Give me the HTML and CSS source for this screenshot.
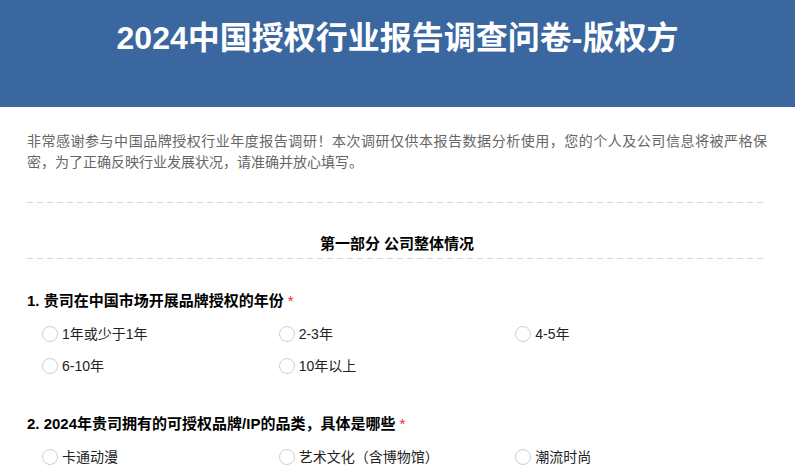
FILE: index.html
```html
<!DOCTYPE html>
<html lang="zh-CN">
<head>
<meta charset="utf-8">
<title>2024中国授权行业报告调查问卷-版权方</title>
<link rel="stylesheet" href="styles.css">
</head>
<body>
<header class="banner">
  <h1 class="banner-title">2024中国授权行业报告调查问卷-版权方</h1>
</header>
<main class="survey">
  <p class="intro">非常感谢参与中国品牌授权行业年度报告调研！本次调研仅供本报告数据分析使用，您的个人及公司信息将被严格保密，为了正确反映行业发展状况，请准确并放心填写。</p>
  <div class="divider divider-top"></div>
  <h2 class="section-title">第一部分 公司整体情况</h2>
  <div class="divider divider-section"></div>

  <section class="question">
    <div class="q-title">1. 贵司在中国市场开展品牌授权的年份 <span class="req">*</span></div>
    <div class="options">
      <label class="option"><span class="radio"></span><span class="opt-text">1年或少于1年</span></label>
      <label class="option"><span class="radio"></span><span class="opt-text">2-3年</span></label>
      <label class="option"><span class="radio"></span><span class="opt-text">4-5年</span></label>
      <label class="option"><span class="radio"></span><span class="opt-text">6-10年</span></label>
      <label class="option"><span class="radio"></span><span class="opt-text">10年以上</span></label>
    </div>
  </section>

  <section class="question">
    <div class="q-title">2. 2024年贵司拥有的可授权品牌/IP的品类，具体是哪些 <span class="req">*</span></div>
    <div class="options">
      <label class="option"><span class="radio"></span><span class="opt-text">卡通动漫</span></label>
      <label class="option"><span class="radio"></span><span class="opt-text">艺术文化（含博物馆）</span></label>
      <label class="option"><span class="radio"></span><span class="opt-text">潮流时尚</span></label>
    </div>
  </section>
</main>
</body>
</html>
```

FILE: styles.css
```css
html, body {
  margin: 0;
  padding: 0;
  background: #fff;
}
body {
  font-family: "Liberation Sans", Arial, "Noto Sans CJK SC", sans-serif;
  color: #333;
  font-size: 14px;
  line-height: 21px;
}
.banner {
  background: #3b67a0;
  height: 107px;
  box-sizing: border-box;
  padding-top: 18px;
}
.banner-title {
  margin: 0;
  text-align: center;
  color: #fff;
  font-size: 32px;
  line-height: 40px;
  font-weight: bold;
}
.survey {
  padding: 24px 28px 0 27px;
}
.intro {
  margin: 0;
  color: #666;
  text-align: justify;
}
.divider {
  height: 1px;
  background-image: linear-gradient(to right, #d6d6d6 60%, transparent 60%);
  background-size: 10px 1px;
  background-repeat: repeat-x;
}
.divider-top {
  margin-top: 29px;
}
.section-title {
  margin: 30px 0 0;
  font-size: 15px;
  font-weight: bold;
  text-align: center;
  color: #000;
  line-height: 22px;
}
.divider-section {
  margin-top: 3px;
}
.question {
  margin-top: 31px;
}
.q-title {
  font-size: 15px;
  line-height: 22px;
  font-weight: bold;
  color: #000;
}
.req {
  color: #e0312b;
  font-weight: normal;
}
.options {
  margin-top: 6px;
  padding: 0 15px;
  display: grid;
  grid-template-columns: repeat(3, 1fr);
}
.option {
  height: 32px;
  display: flex;
  align-items: center;
  gap: 4px;
  color: #222;
}
.radio {
  width: 14px;
  height: 14px;
  border: 1px solid #cfcfcf;
  border-radius: 50%;
  background: #fff;
  flex: none;
}
```
